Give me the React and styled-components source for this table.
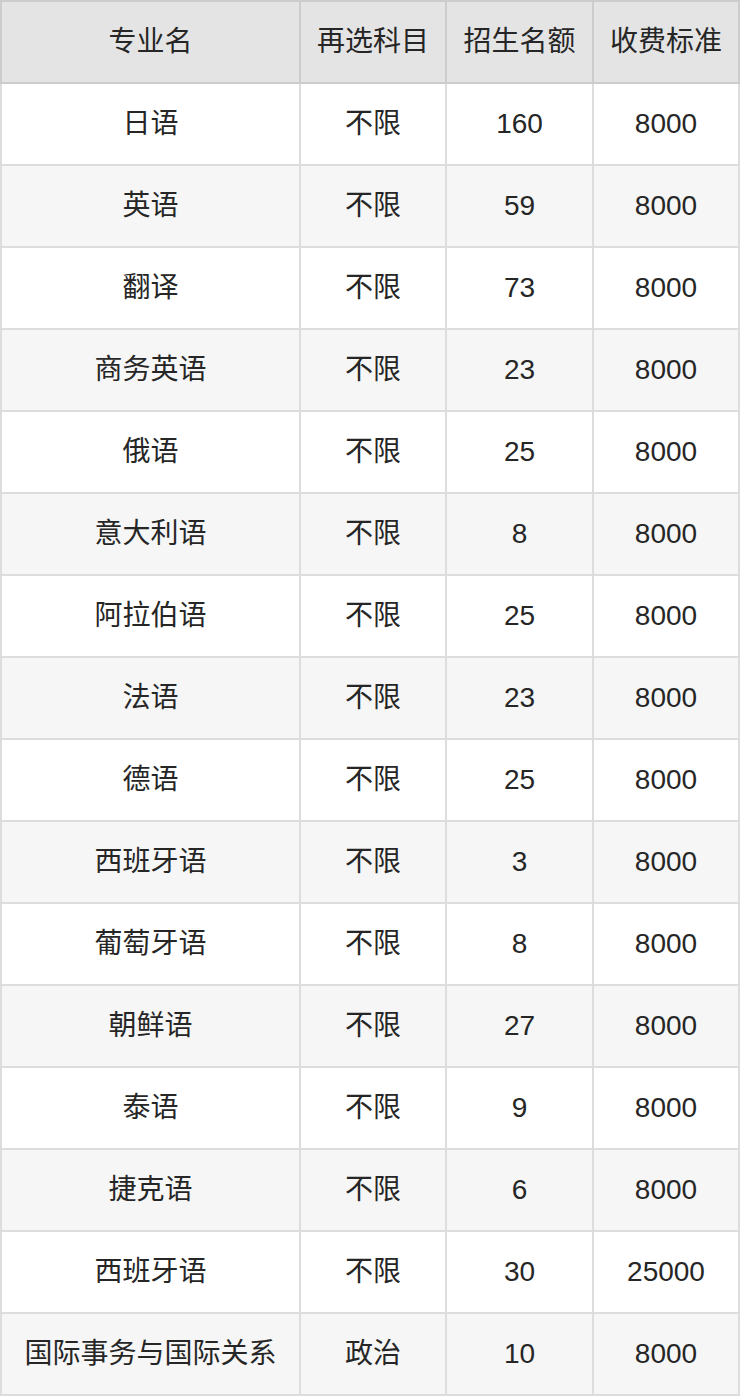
import React from "react";
import styled, { createGlobalStyle } from "styled-components";

const GlobalStyle = createGlobalStyle`
  html, body {
    margin: 0;
    padding: 0;
    background: #ffffff;
  }
  body {
    font-family: "Liberation Sans", "Noto Sans CJK SC", sans-serif;
    color: #262626;
  }
`;

const columns = "297px 144px 145px 144px";

const Table = styled.div`
  width: 740px;
  display: flex;
  flex-direction: column;
`;

const HeaderRow = styled.div`
  display: grid;
  grid-template-columns: ${columns};
  gap: 2px;
  padding: 2px;
  background: #cccccc;
`;

const BodyRow = styled.div`
  display: grid;
  grid-template-columns: ${columns};
  gap: 2px;
  padding: 0 2px 2px;
  background: #dddddd;
`;

const Cell = styled.div`
  height: 80px;
  display: flex;
  align-items: center;
  justify-content: center;
  font-size: 28px;
  line-height: 1;
  white-space: nowrap;
  background: ${(props) =>
    props.head ? "#e4e4e4" : props.striped ? "#f6f6f6" : "#ffffff"};
`;

const headers = ["专业名", "再选科目", "招生名额", "收费标准"];

const rows = [
  ["日语", "不限", "160", "8000"],
  ["英语", "不限", "59", "8000"],
  ["翻译", "不限", "73", "8000"],
  ["商务英语", "不限", "23", "8000"],
  ["俄语", "不限", "25", "8000"],
  ["意大利语", "不限", "8", "8000"],
  ["阿拉伯语", "不限", "25", "8000"],
  ["法语", "不限", "23", "8000"],
  ["德语", "不限", "25", "8000"],
  ["西班牙语", "不限", "3", "8000"],
  ["葡萄牙语", "不限", "8", "8000"],
  ["朝鲜语", "不限", "27", "8000"],
  ["泰语", "不限", "9", "8000"],
  ["捷克语", "不限", "6", "8000"],
  ["西班牙语", "不限", "30", "25000"],
  ["国际事务与国际关系", "政治", "10", "8000"],
];

export default function App() {
  return (
    <>
      <GlobalStyle />
      <Table>
        <HeaderRow>
          {headers.map((h) => (
            <Cell key={h} head>
              {h}
            </Cell>
          ))}
        </HeaderRow>
        {rows.map((row, i) => (
          <BodyRow key={i}>
            {row.map((value, j) => (
              <Cell key={j} striped={i % 2 === 1}>
                {value}
              </Cell>
            ))}
          </BodyRow>
        ))}
      </Table>
    </>
  );
}
